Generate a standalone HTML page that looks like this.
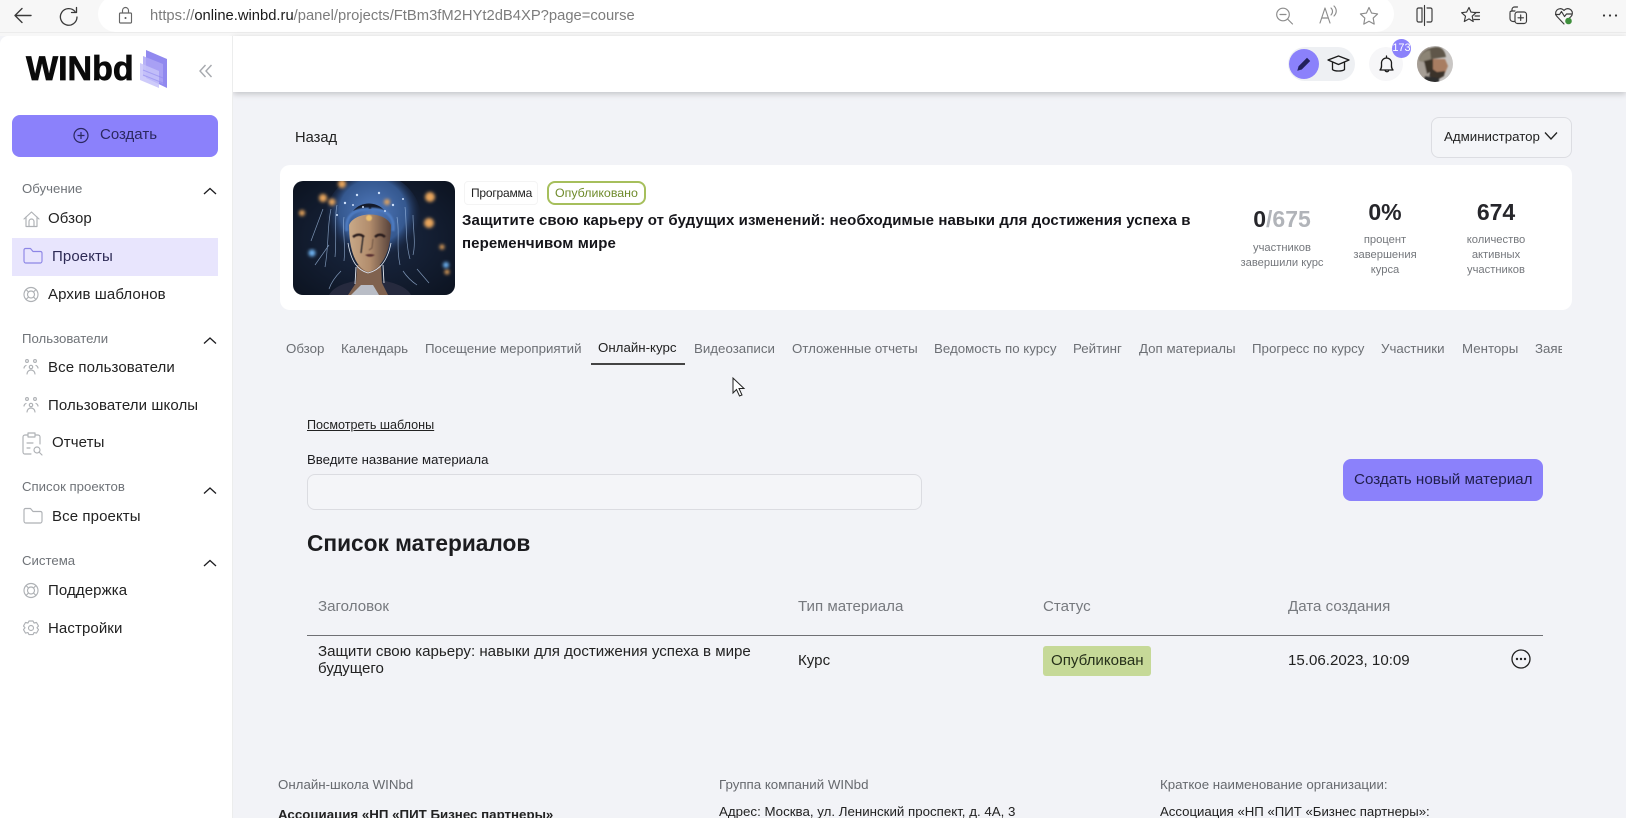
<!DOCTYPE html>
<html lang="ru"><head><meta charset="utf-8"><title>WINbd</title>
<style>
html,body{margin:0;padding:0;width:1626px;height:818px;overflow:hidden;background:#f2f3f7;font-family:"Liberation Sans","Noto Sans CJK SC",sans-serif;color:#1c1c1f}
body{filter:blur(.3px)}
.t{position:absolute;white-space:nowrap;line-height:20px;height:20px}
.b{position:absolute;box-sizing:border-box}
svg{position:absolute;overflow:visible}
.ic{fill:none;stroke:#aeb1b5;stroke-width:1.15;stroke-linecap:round;stroke-linejoin:round}
.br{fill:none;stroke:#3a3a3a;stroke-width:1.15;stroke-linecap:round;stroke-linejoin:round}
.gr{fill:none;stroke:#8c8c8c;stroke-width:1.15;stroke-linecap:round;stroke-linejoin:round}
.sec{font-size:13.2px;color:#6f7378}
.nav{font-size:15px;color:#222;letter-spacing:.1px}
.tab{font-size:13.3px;color:#6c6f74;top:339px}
.lab{font-size:11.2px;color:#74777c;text-align:center;line-height:15px;height:auto}
.th{font-size:15.1px;color:#76797e;top:597px}
.foot{font-size:13.3px;color:#66696e}
.row{font-size:15.1px;color:#222}
</style></head><body>
<!-- browser bar -->
<div class="b" style="left:0;top:0;width:1626px;height:36px;background:#f7f7f7"></div>
<div class="b" style="left:98px;top:-4px;width:1296px;height:36px;background:#fff;border-radius:18px"></div>
<div class="b" style="left:0;top:32px;width:1626px;height:1px;background:#ececec"></div>
<svg style="left:0;top:0" width="1626" height="36">
<path class="br" style="stroke-width:1.4" d="M31 15.500H15M22 8.500l-7 7 7 7"/>
<path class="br" style="stroke-width:1.3" d="M75 11.500A8.300 8.300 0 1 0 77 17M76.500 7.500v5h-5"/>
<path class="gr" style="stroke:#666" d="M120.500 13h10a1 1 0 0 1 1 1v8a1 1 0 0 1-1 1h-10a1 1 0 0 1-1-1v-8a1 1 0 0 1 1-1zM122.500 13v-2.500a3 3 0 0 1 6 0V13"/><circle cx="125.500" cy="18" r="1" fill="#555"/>
<g class="gr"><circle cx="1283" cy="14.500" r="6.300"/><path d="M1280 14.500h6M1288 19.500l4.500 4.500"/></g>
<g class="gr"><path d="M1320 23l5-15 5 15M1322 18h6M1331 8c2 2 2 5 0 7M1334 6c3 3 3 7 0 10"/></g>
<path class="gr" d="M1369 7.500l2.600 5.600 6 .8-4.400 4.200 1 6-5.200-2.900-5.200 2.900 1-6-4.400-4.200 6-.8z"/>
<g class="br"><path d="M1422 8h-3.500a1.500 1.500 0 0 0-1.500 1.500v11a1.500 1.500 0 0 0 1.500 1.500h3.500zM1424.500 5.500v20M1427 8h3.500a1.500 1.500 0 0 1 1.500 1.500v11a1.500 1.500 0 0 1-1.500 1.500H1427"/></g>
<g class="br"><path d="M1469 7.500l2 4.600 5 .6-3.800 3.500 1 5.300-4.200-2.600-4.700 2.600 1.200-5.300-3.900-3.500 5-.6zM1474 12.500h5.500M1475 16h4.500M1474 19.500h5.500"/></g>
<g class="br"><path d="M1512 10.500V9.500a2.500 2.500 0 0 1 2.500-2.500h3M1510 12a2.500 2.500 0 0 1 2-1h3"/><rect x="1515" y="12" width="11.500" height="11.500" rx="2.500"/><path d="M1520.700 15v5.500M1518 17.800h5.500M1515 21.500h-2a3 3 0 0 1-3-3V13"/></g>
<g class="br"><path d="M1564 24l-7-7.500a4.600 4.600 0 0 1 6.300-6.700l.7.700.7-.7a4.600 4.600 0 0 1 6.300 6.700l-1.500 1.500M1555.500 14.500h4l2-3 3 5 2-2.500h5"/></g><circle cx="1568.500" cy="21" r="3.300" fill="#3f8f3c"/>
<circle cx="1604" cy="15.500" r="1.100" fill="#333"/><circle cx="1610" cy="15.500" r="1.100" fill="#333"/><circle cx="1616" cy="15.500" r="1.100" fill="#333"/>
</svg>
<div class="t" style="left:150px;top:6px;font-size:14.77px;color:#7c7c7c">https://<span style="color:#1a1a1a">online.winbd.ru</span>/panel/projects/FtBm3fM2HYt2dB4XP?page=course</div>

<!-- header + sidebar -->
<div class="b" style="left:233px;top:36px;width:1393px;height:56px;background:#fff;box-shadow:0 2px 6px rgba(0,0,0,.2)"></div>
<div class="b" style="left:0;top:36px;width:233px;height:782px;background:#fff;border-right:1px solid #eceded;border-top-left-radius:8px"></div>

<div class="t" style="left:26px;top:52px;height:34px;line-height:34px;font-size:34px;font-weight:700;color:#0a0a0a;letter-spacing:0;-webkit-text-stroke:.7px #0a0a0a">WINbd</div>
<svg style="left:140px;top:50px" width="30" height="40">
<path d="M6 0l21 9v29L6 28z" fill="#9189ef"/><path d="M3 6l20 8v20L3 26z" fill="#aba5f4" opacity=".85"/><path d="M0 13l19 8v17L0 30z" fill="#c6c2f9" opacity=".85"/>
<path d="M3 20l20 8M3 25l20 8" stroke="#8d85ef" stroke-width="1" opacity=".55"/></svg>
<svg style="left:199px;top:64px" width="14" height="14"><path d="M6.500 1L1 7l5.500 6M12.500 1L7 7l5.500 6" fill="none" stroke="#a6a9ae" stroke-width="1.400"/></svg>

<div class="b" style="left:12px;top:115px;width:206px;height:42px;background:#8b81fb;border-radius:8px"></div>
<svg style="left:73px;top:128px" width="16" height="16"><circle cx="8" cy="7.500" r="7" fill="none" stroke="#2b2860" stroke-width="1.200"/><path d="M8 4v7M4.500 7.500h7" stroke="#2b2860" stroke-width="1.200"/></svg>
<div class="t" style="left:100px;top:125px;font-size:15px;color:#2b2860">Создать</div>

<div class="t sec" style="left:22px;top:179px">Обучение</div>
<div class="b" style="left:12px;top:238px;width:206px;height:38px;background:#e8e5fd"></div>
<div class="t nav" style="left:48px;top:209px">Обзор</div>
<div class="t nav" style="left:52px;top:247px;color:#2d2a55">Проекты</div>
<div class="t nav" style="left:48px;top:285px">Архив шаблонов</div>
<div class="t sec" style="left:22px;top:329px">Пользователи</div>
<div class="t nav" style="left:48px;top:358px">Все пользователи</div>
<div class="t nav" style="left:48px;top:396px">Пользователи школы</div>
<div class="t nav" style="left:52px;top:433px">Отчеты</div>
<div class="t sec" style="left:22px;top:477px">Список проектов</div>
<div class="t nav" style="left:52px;top:507px">Все проекты</div>
<div class="t sec" style="left:22px;top:551px">Система</div>
<div class="t nav" style="left:48px;top:581px">Поддержка</div>
<div class="t nav" style="left:48px;top:619px">Настройки</div>

<svg style="left:0;top:0" width="233" height="818">
<g fill="none" stroke="#1c1c1f" stroke-width="1.300"><path d="M204 194l6-5.500 6 5.500"/><path d="M204 343.500l6-5.500 6 5.500"/><path d="M204 493.500l6-5.500 6 5.500"/><path d="M204 566l6-5.500 6 5.500"/></g>
<g class="ic">
<path d="M24 219l7.500-7 7.500 7M26 217v9.500h11V217M29 226.500v-5a2.500 2.500 0 0 1 5 0v5"/>
<path d="M24 250a1.500 1.500 0 0 1 1.500-1.500h5l2.500 3h7.500a1.500 1.500 0 0 1 1.500 1.500v8a2 2 0 0 1-2 2H26a2 2 0 0 1-2-2z" style="stroke:#8d86e6"/>
<circle cx="31" cy="294.500" r="7"/><circle cx="31" cy="294.500" r="3.500"/><path d="M26 289.500l2.500 2.500M36 289.500l-2.500 2.500M26 299.500l2.500-2.500M36 299.500l-2.500-2.500"/>
<g><circle cx="27" cy="361" r="1.400"/><circle cx="35" cy="361" r="1.400"/><circle cx="31" cy="367" r="1.700"/><path d="M27 374a4 4 0 0 1 8 0M24 368a3 3 0 0 1 2-2.500M38 368a3 3 0 0 0-2-2.500"/></g>
<g><circle cx="27" cy="399" r="1.400"/><circle cx="35" cy="399" r="1.400"/><circle cx="31" cy="405" r="1.700"/><path d="M27 412a4 4 0 0 1 8 0M24 406a3 3 0 0 1 2-2.500M38 406a3 3 0 0 0-2-2.500"/></g>
<path d="M28 435h-3a2 2 0 0 0-2 2v15a2 2 0 0 0 2 2h6M35 435h3a2 2 0 0 1 2 2v7M28 433h7v4h-7zM27 443h6M27 448h3"/><circle cx="37" cy="450" r="3"/><path d="M39 452l3 3"/>
<path d="M24 510a1.500 1.500 0 0 1 1.500-1.500h5l2.500 3h7.500a1.500 1.500 0 0 1 1.500 1.500v8a2 2 0 0 1-2 2H26a2 2 0 0 1-2-2z"/>
<circle cx="31" cy="590.500" r="7"/><circle cx="31" cy="590.500" r="3.500"/><path d="M26 585.500l2.500 2.500M36 585.500l-2.500 2.500M26 595.500l2.500-2.500M36 595.500l-2.500-2.500"/>
<path d="M29 621h4l1 2 2.500-.5 2 3.500-1.500 1.800 1.500 1.800-2 3.500-2.500-.5-1 2h-4l-1-2-2.500.5-2-3.500 1.500-1.800-1.500-1.800 2-3.500 2.500.5z"/><circle cx="31" cy="628" r="2.500"/>
</g></svg>

<!-- header icons -->
<div class="b" style="left:1288px;top:47px;width:67px;height:34px;background:#eef0f3;border-radius:17px"></div>
<div class="b" style="left:1289px;top:49px;width:30px;height:30px;background:#8b81fb;border-radius:50%"></div>
<div class="b" style="left:1369px;top:47px;width:34px;height:34px;background:#f6f6f8;border-radius:50%"></div>
<svg style="left:0;top:0" width="1626" height="100">
<path d="M1298 70l1-3.500 8-8 2.500 2.500-8 8z" fill="#23215c" stroke="#23215c" stroke-width="1"/>
<g fill="none" stroke="#1a1a1a" stroke-width="1.300" stroke-linejoin="round"><path d="M1328 60l10.500-4 10.500 4-10.500 4.500zM1332.500 62.500v7c2 2 10 2 12 0v-7"/></g>
<g fill="none" stroke="#1a1a1a" stroke-width="1.300" stroke-linecap="round" stroke-linejoin="round"><path d="M1380 70c2-2 1.500-4 1.500-7a5 5 0 0 1 10 0c0 3-.5 5 1.500 7zM1385 70a2 2 0 0 0 3.500 1M1386.500 57.500v-1.500"/></g>
</svg>
<div class="b" style="left:1392px;top:39px;width:19px;height:19px;background:#8b81fb;border-radius:50%;color:#fff;font-size:11px;line-height:19px;text-align:center">173</div>
<svg style="left:1417px;top:46px" width="36" height="36" viewBox="0 0 36 36"><defs><clipPath id="av"><circle cx="18" cy="18" r="18"/></clipPath><filter id="ab"><feGaussianBlur stdDeviation=".8"/></filter></defs><g clip-path="url(#av)"><rect width="36" height="36" fill="#c9c6c4"/><g filter="url(#ab)"><rect x="-2" y="-2" width="14" height="40" fill="#a69e95"/>
<path d="M13 13h15l3 7-3 7-10 3z" fill="#a87d62"/>
<path d="M2 14C3 6 12 1 20 1c5 0 8 4 9 10l-14 2-8 3z" fill="#5e5648"/><path d="M2 15C3 8 8 5 13 4l1 9-8 3z" fill="#8c8474"/>
<path d="M7 15l9-2 0 11-6 4z" fill="#3e342b"/>
<path d="M14 22l6 4 8-1-1 5-7 4-8-4z" fill="#3a302a"/>
<path d="M5 38l3-8 14 2v6z" fill="#2d2d2f"/></g></g></svg>

<!-- content top -->
<div class="t" style="left:295px;top:128px;font-size:14.7px;color:#222">Назад</div>
<div class="b" style="left:1431px;top:117px;width:141px;height:41px;border:1px solid #dcdde2;border-radius:8px;background:#f4f5f8"></div>
<div class="t" style="left:1444px;top:127px;font-size:13.3px;color:#222">Администратор</div>
<svg style="left:1544px;top:131px" width="14" height="10"><path d="M1 1.500l6 6.500 6-6.500" fill="none" stroke="#222" stroke-width="1.300"/></svg>

<div class="b" style="left:280px;top:165px;width:1292px;height:145px;background:#fff;border-radius:10px"></div>
<svg style="left:293px;top:181px" width="162" height="114" viewBox="0 0 162 114">
<defs>
<clipPath id="im"><rect width="162" height="114" rx="10"/></clipPath>
<radialGradient id="halo" cx=".5" cy=".42" r=".5"><stop offset="0" stop-color="#4f78bb"/><stop offset=".7" stop-color="#35588f"/><stop offset="1" stop-color="#1b2b4d" stop-opacity="0"/></radialGradient>
<radialGradient id="bg" cx=".5" cy=".5" r=".7"><stop offset="0" stop-color="#1b2944"/><stop offset="1" stop-color="#0c1320"/></radialGradient>
<linearGradient id="face" x1="0" x2="1" y1="0" y2="0"><stop offset="0" stop-color="#c9a988"/><stop offset=".5" stop-color="#b18c6c"/><stop offset="1" stop-color="#57423b"/></linearGradient>
<filter id="bl"><feGaussianBlur stdDeviation="1.500"/></filter>
<filter id="bs"><feGaussianBlur stdDeviation=".6"/></filter>
<filter id="bh"><feGaussianBlur stdDeviation=".9"/></filter>
</defs>
<g clip-path="url(#im)">
<rect width="162" height="114" fill="url(#bg)"/>
<ellipse cx="80" cy="38" rx="48" ry="46" fill="url(#halo)"/>
<g filter="url(#bl)" fill="#e8a55c">
<circle cx="30" cy="17" r="4"/><circle cx="39" cy="21" r="3.500"/><circle cx="49" cy="3" r="4"/><circle cx="94" cy="21" r="3"/><circle cx="137" cy="16" r="5"/><circle cx="136" cy="42" r="5"/><circle cx="9" cy="32" r="3"/><circle cx="149" cy="66" r="2.500"/><circle cx="154" cy="91" r="2.500"/>
</g>
<g filter="url(#bl)" fill="#6fb5f5"><circle cx="153" cy="84" r="3"/><circle cx="19" cy="72" r="3.500"/></g>
<path d="M36 114c6-10 18-12 26-14h30c10 2 22 6 26 14z" fill="#262a3e"/>
<path d="M64 84l-1 18-8 12h40l-6-12-1-18z" fill="#80624f"/>
<path d="M58 114l10-10 12 0 6 10z" fill="#b9bdc6"/>
<path d="M63 86l-1 17M90 84l1 18" stroke="#e4e9f2" stroke-width=".9" fill="none"/>
<path d="M56 44C56 70 63 87 75 91 90 87 98 70 98 44 92 30 62 30 56 44z" fill="url(#face)"/>
<path d="M60 30c8-10 24-10 32 0-7-3-25-3-32 0z" fill="#141a2a"/>
<g filter="url(#bh)"><path d="M54 50C52 36 60 28 76 28M100 50c2-14-6-22-22-22" stroke="#4d7ac0" stroke-width="3" fill="none"/></g>
<g filter="url(#bs)"><path d="M60 56c4-3 8-3 11 0M82 56c3-3 7-3 10 0" stroke="#2b1f1f" stroke-width="2.400" fill="none"/><path d="M72 74q5-2 10 0-5 3.500-10 0z" fill="#5a3330"/><path d="M70 56l-2 16" stroke="#1e1a22" stroke-width="1.200"/><path d="M80 58l-1 9 -3 2" stroke="#6e5244" fill="none"/></g>
<circle cx="76" cy="37" r="3" fill="#ecc06e" filter="url(#bs)"/>
<g fill="none" stroke="#a9c8ee" stroke-width=".7" opacity=".7">
<path d="M38 28c-4 18-2 36-6 58M44 24c-3 14 0 30-2 52M51 36c-2 14 2 26 0 44M104 36c3 16-1 30 3 48M112 26c2 16 0 34 5 52M120 34c0 14 3 28 0 40M18 60l12-32M22 84l14-20M124 88l12 14M48 90c-6 6-10 12-12 18M110 90c4 6 8 10 14 14"/>
</g>
<path d="M55 62C58 80 64 89 75 92 88 89 95 78 98 62" fill="none" stroke="#dde6f2" stroke-width=".8"/>
<g fill="#cfe1fb"><circle cx="52" cy="22" r="1.200"/><circle cx="64" cy="14" r="1.200"/><circle cx="86" cy="12" r="1.200"/><circle cx="100" cy="24" r="1.200"/><circle cx="70" cy="26" r="1"/><circle cx="92" cy="30" r="1"/><circle cx="60" cy="24" r="1"/><circle cx="110" cy="18" r="1"/><circle cx="44" cy="34" r="1"/></g>
</g></svg>

<div class="b" style="left:464px;top:181px;width:74px;height:24px;background:#fff;border:1px solid #f4f4f4;border-radius:4px"></div>
<div class="t" style="left:471px;top:183px;font-size:12px;color:#222;letter-spacing:-.2px">Программа</div>
<div class="b" style="left:547px;top:181px;width:99px;height:24px;background:#fff;border:2px solid #a6bf5c;border-radius:8px"></div>
<div class="t" style="left:555px;top:183px;font-size:12.4px;color:#6f8b2b">Опубликовано</div>
<div class="t" style="left:462px;top:211px;font-size:15px;font-weight:700;color:#15151a;letter-spacing:.1px">Защитите свою карьеру от будущих изменений: необходимые навыки для достижения успеха в</div>
<div class="t" style="left:462px;top:234px;font-size:15px;font-weight:700;color:#15151a;letter-spacing:.1px">переменчивом мире</div>

<div class="t" style="left:1232px;width:100px;top:209px;text-align:center;font-size:23px;font-weight:700;color:#26262b">0<span style="color:#b1b4b9">/675</span></div>
<div class="t lab" style="left:1232px;width:100px;top:241px;line-height:15px">участников<br>завершили курс</div>
<div class="t" style="left:1335px;width:100px;top:202px;text-align:center;font-size:23px;font-weight:700;color:#26262b">0%</div>
<div class="t lab" style="left:1335px;width:100px;top:233px">процент<br>завершения<br>курса</div>
<div class="t" style="left:1446px;width:100px;top:202px;text-align:center;font-size:23px;font-weight:700;color:#26262b">674</div>
<div class="t lab" style="left:1446px;width:100px;top:233px">количество<br>активных<br>участников</div>

<!-- tabs -->
<div class="t tab" style="left:286px">Обзор</div>
<div class="t tab" style="left:341px">Календарь</div>
<div class="t tab" style="left:425px">Посещение мероприятий</div>
<div class="t tab" style="left:598px;color:#222;top:338px">Онлайн-курс</div>
<div class="b" style="left:591px;top:363px;width:94px;height:2px;background:#444"></div>
<div class="t tab" style="left:694px">Видеозаписи</div>
<div class="t tab" style="left:792px">Отложенные отчеты</div>
<div class="t tab" style="left:934px">Ведомость по курсу</div>
<div class="t tab" style="left:1073px">Рейтинг</div>
<div class="t tab" style="left:1139px">Доп материалы</div>
<div class="t tab" style="left:1252px">Прогресс по курсу</div>
<div class="t tab" style="left:1381px">Участники</div>
<div class="t tab" style="left:1462px">Менторы</div>
<div class="t tab" style="left:1535px;width:27px;overflow:hidden">Заявки</div>

<svg style="left:732px;top:377px" width="14" height="21"><path d="M1 1v15l3.500-3.500 3 6.500 2.500-1-3-6.500h5z" fill="#fff" stroke="#222" stroke-width="1"/></svg>

<div class="t" style="left:307px;top:415px;font-size:12.6px;color:#222;text-decoration:underline">Посмотреть шаблоны</div>
<div class="t" style="left:307px;top:450px;font-size:13.2px;color:#1c1c1f">Введите название материала</div>
<div class="b" style="left:307px;top:474px;width:615px;height:36px;border:1px solid #dbdce1;border-radius:8px;background:#f4f5f8"></div>
<div class="b" style="left:1343px;top:459px;width:200px;height:42px;background:#8b81fb;border-radius:8px"></div>
<div class="t" style="left:1354px;top:470px;font-size:15.2px;color:#22204f">Создать новый материал</div>
<div class="t" style="left:307px;top:533px;font-size:22.7px;font-weight:700;color:#1c1c1f">Список материалов</div>

<div class="t th" style="left:318px">Заголовок</div>
<div class="t th" style="left:798px">Тип материала</div>
<div class="t th" style="left:1043px">Статус</div>
<div class="t th" style="left:1288px">Дата создания</div>
<div class="b" style="left:307px;top:635px;width:1236px;height:1px;background:#6f7074"></div>
<div class="t row" style="left:318px;top:642px">Защити свою карьеру: навыки для достижения успеха в мире</div>
<div class="t row" style="left:318px;top:659px">будущего</div>
<div class="t row" style="left:798px;top:651px">Курс</div>
<div class="b" style="left:1043px;top:646px;width:108px;height:30px;background:#c6d998;border-radius:3px"></div>
<div class="t row" style="left:1051px;top:651px;color:#26301a">Опубликован</div>
<div class="t row" style="left:1288px;top:651px">15.06.2023, 10:09</div>
<svg style="left:1511px;top:649px" width="20" height="20"><circle cx="10" cy="10" r="9" fill="none" stroke="#222" stroke-width="1.300"/><circle cx="6" cy="10" r="1.200" fill="#222"/><circle cx="10" cy="10" r="1.200" fill="#222"/><circle cx="14" cy="10" r="1.200" fill="#222"/></svg>

<!-- footer -->
<div class="t foot" style="left:278px;top:775px">Онлайн-школа WINbd</div>
<div class="t foot" style="left:719px;top:775px">Группа компаний WINbd</div>
<div class="t foot" style="left:1160px;top:775px">Краткое наименование организации:</div>
<div class="t" style="left:278px;top:805px;font-size:13.3px;font-weight:700;color:#222">Ассоциация «НП «ПИТ Бизнес партнеры»</div>
<div class="t" style="left:719px;top:802px;font-size:13.3px;color:#222">Адрес: Москва, ул. Ленинский проспект, д. 4А, 3</div>
<div class="t" style="left:1160px;top:802px;font-size:13.2px;color:#222">Ассоциация «НП «ПИТ «Бизнес партнеры»:</div>
</body></html>
